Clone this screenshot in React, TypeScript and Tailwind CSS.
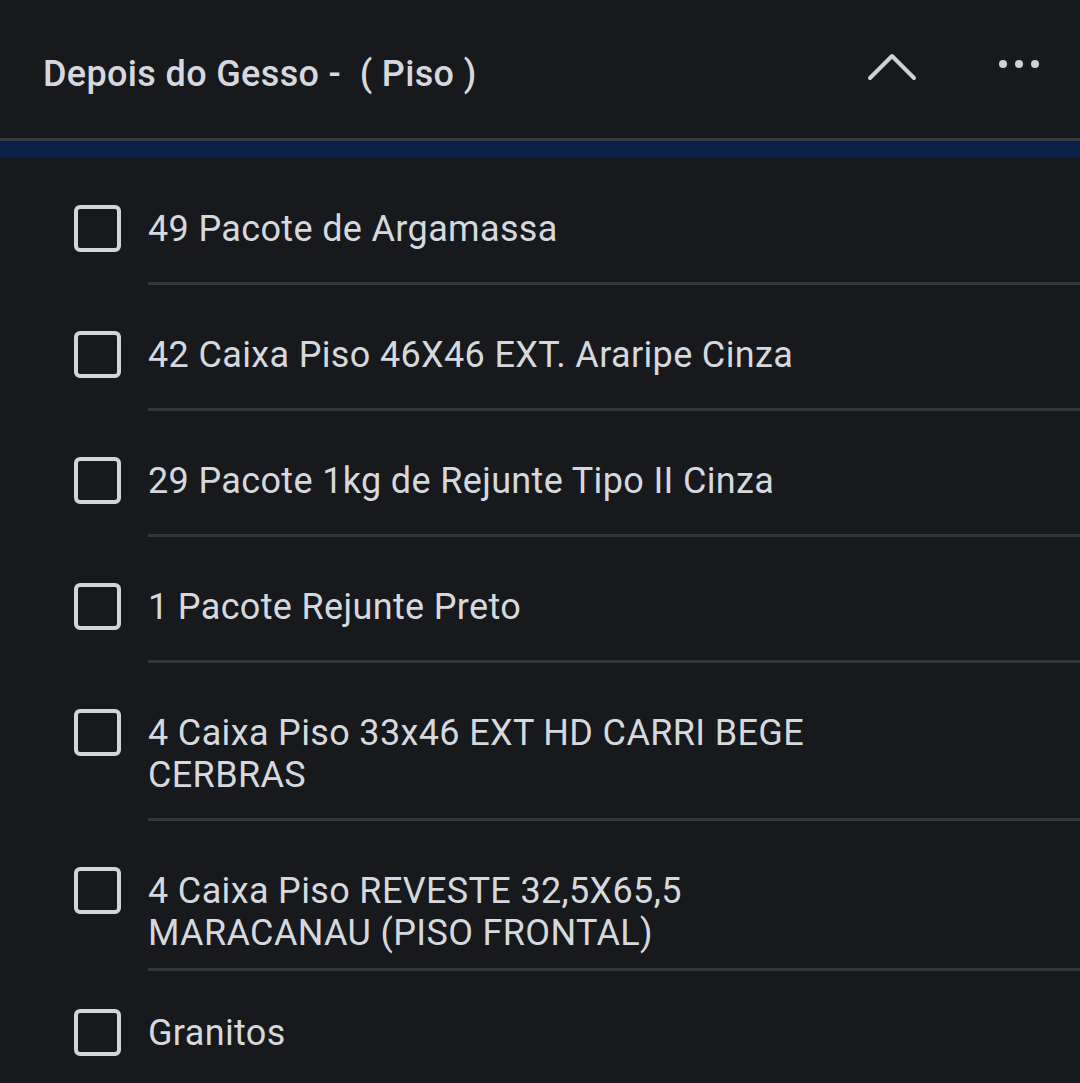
import React from 'react';

const items = [
  { text: '49 Pacote de Argamassa', pt: 'pt-[49px]', pb: 'pb-[32px]' },
  { text: '42 Caixa Piso 46X46 EXT. Araripe Cinza', pt: 'pt-[49px]', pb: 'pb-[32px]' },
  { text: '29 Pacote 1kg de Rejunte Tipo II Cinza', pt: 'pt-[49px]', pb: 'pb-[32px]' },
  { text: '1 Pacote Rejunte Preto', pt: 'pt-[49px]', pb: 'pb-[32px]' },
  { text: '4 Caixa Piso 33x46 EXT HD CARRI BEGE CERBRAS', pt: 'pt-[49px]', pb: 'pb-[22px]' },
  { text: '4 Caixa Piso REVESTE 32,5X65,5 MARACANAU (PISO FRONTAL)', pt: 'pt-[49px]', pb: 'pb-[14px]' },
  { text: 'Granitos', pt: 'pt-[41px]', pb: 'pb-[32px]' },
];

const App = () => {
  return (
    <div className="min-h-[1083px] bg-[#17191c] text-[#d5d9df] overflow-hidden" style={{ fontFamily: 'Roboto, "Noto Sans", sans-serif' }}>
      {/* Header */}
      <header className="h-[138px] flex items-center pl-[43px] pr-[43px] border-b-[3px] border-[#373a3f] box-content">
        <h1 className="text-[36px] leading-[42px] tracking-[0.35px] font-medium whitespace-pre flex-1 mt-[10px]">Depois do Gesso -  ( Piso )</h1>
        <button className="w-[56px] h-[40px] flex items-center justify-center mr-[79px] -mt-[5px]">
          <svg width="52" height="30" viewBox="0 0 52 30" fill="none">
            <path d="M4 26 L26 4 L48 26" stroke="#cdd2d9" strokeWidth="4" strokeLinecap="round" strokeLinejoin="round" />
          </svg>
        </button>
        <button className="flex items-center gap-[8px] -mt-[10px] -mr-[2px]">
          <span className="w-[8px] h-[8px] rounded-full bg-[#cdd2d9]" />
          <span className="w-[8px] h-[8px] rounded-full bg-[#cdd2d9]" />
          <span className="w-[8px] h-[8px] rounded-full bg-[#cdd2d9]" />
        </button>
      </header>
      <div className="h-[16px] bg-[#0c2148]" />

      {/* Checklist */}
      <ul className="mt-[2px]">
        {items.map((item, idx) => (
          <li key={idx} className="flex">
            <div className={`w-[148px] shrink-0 flex justify-end pr-[27px] ${item.pt}`}>
              <span className="mt-[-3px] w-[47px] h-[47px] rounded-[6px] border-[4px] border-[#d0d5dc]" />
            </div>
            <div className={`flex-1 ${item.pt} ${item.pb} ${idx < items.length - 1 ? 'border-b-[3px] border-[#33363b]' : ''}`}>
              <p className="text-[36px] leading-[42px] tracking-[0.35px] pr-[220px]">{item.text}</p>
            </div>
          </li>
        ))}
      </ul>
    </div>
  );
};

export default App;
